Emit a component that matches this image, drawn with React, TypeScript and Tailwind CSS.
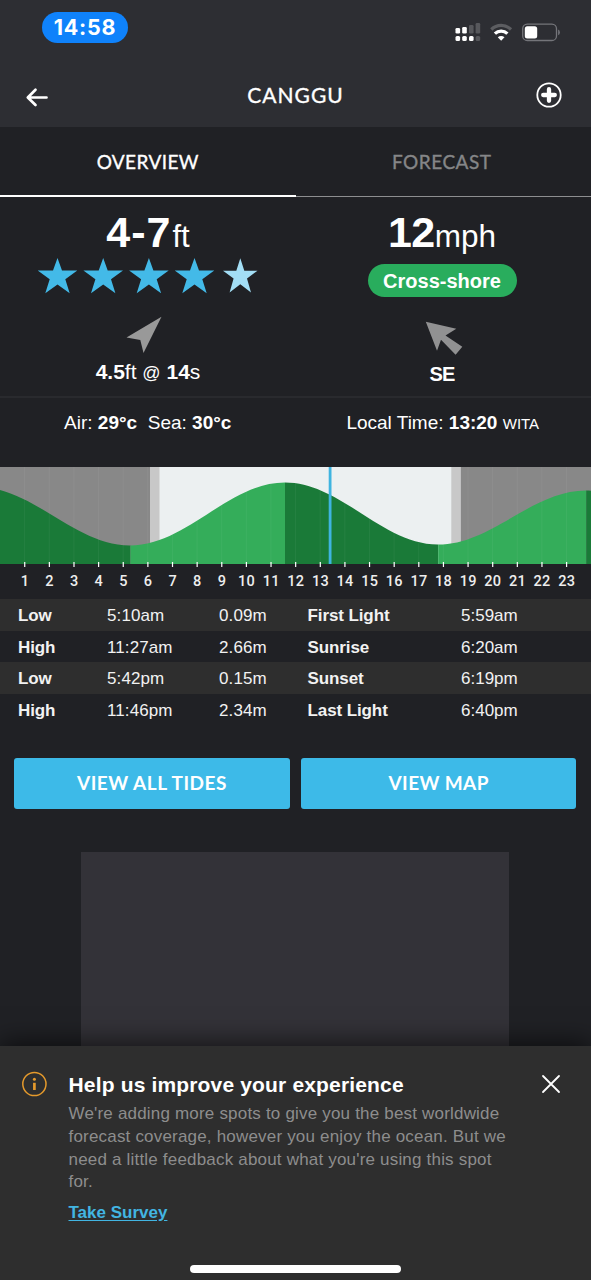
import React from "react";

const tides = [
  ["Low", "5:10am", "0.09m", "First Light", "5:59am"],
  ["High", "11:27am", "2.66m", "Sunrise", "6:20am"],
  ["Low", "5:42pm", "0.15m", "Sunset", "6:19pm"],
  ["High", "11:46pm", "2.34m", "Last Light", "6:40pm"],
];

const hours = Array.from({ length: 23 }, (_, i) => i + 1);

function StatusBar() {
  return (
    <div className="flex h-[62px] items-start justify-between pl-[42px] pr-[31px]">
      <div className="mt-[12px] flex h-[31px] w-[86px] items-center justify-center rounded-full bg-[#0f82fb] font-[Inter,sans-serif] text-[21.500px] font-bold tracking-[0.8px]">
        14:58
      </div>
      <svg className="mt-[20px]" width="106" height="24" viewBox="454 20 106 24">
        <g fill="#fff">
          <rect x="455.5" y="28" width="4.6" height="5.5" rx="1.3" />
          <rect x="462.2" y="27" width="4.6" height="6.5" rx="1.3" />
          <rect x="455.5" y="36" width="4.6" height="5" rx="1.5" />
          <rect x="462.2" y="36" width="4.6" height="5" rx="1.5" />
          <rect x="469" y="36" width="4.6" height="5" rx="1.5" />
        </g>
        <g fill="#57585c">
          <rect x="469" y="25" width="4.6" height="8.5" rx="1.3" />
          <rect x="475.6" y="23" width="4.6" height="10.5" rx="1.3" />
          <rect x="475.6" y="36" width="4.6" height="5" rx="1.5" />
        </g>
        <path d="M491.300 29.500 A14 14 0 0 1 511 29.500" fill="none" stroke="#5c5d61" strokeWidth="3.200" />
        <path d="M494.900 33.600 A8.900 8.900 0 0 1 507.400 33.600" fill="none" stroke="#fff" strokeWidth="3.200" />
        <path d="M497.800 37.300 A4.800 4.800 0 0 1 504.500 37.300 L501.150 40.800 Z" fill="#fff" />
        <rect x="522.700" y="24.200" width="33.800" height="16.300" rx="4.600" fill="none" stroke="#74757a" strokeWidth="1.300" />
        <rect x="524.800" y="26.200" width="12.400" height="12.300" rx="2.500" fill="#fff" />
        <path d="M558.100 29.500 Q559.900 30.300 559.900 32.400 Q559.900 34.500 558.100 35.300 Z" fill="#74757a" />
      </svg>
    </div>
  );
}

function Header() {
  return (
    <header className="h-[127px] bg-[#2d2e33]">
      <StatusBar />
      <div className="flex h-[65px] items-center justify-between pl-[25px] pr-[28px]">
        <svg width="24" height="20" viewBox="25 87 24 20" className="mt-[4px]" fill="none" stroke="#fff" strokeWidth="2.700" strokeLinecap="round" strokeLinejoin="round">
          <path d="M46.500 97.500 H28 M35.500 89.800 L27.800 97.500 L35.500 105" />
        </svg>
        <h1 className="ml-[7px] mt-[1px] font-[Lato,sans-serif] text-[21px] tracking-[1px] [-webkit-text-stroke:0.35px_white]">CANGGU</h1>
        <svg width="28" height="28" viewBox="0 0 28 28">
          <circle cx="14" cy="14" r="11.700" fill="none" stroke="#fff" strokeWidth="1.800" />
          <path d="M14 8.200 V19.800 M8.200 14 H19.800" stroke="#fff" strokeWidth="4.300" strokeLinecap="round" />
        </svg>
      </div>
    </header>
  );
}

function Tabs() {
  return (
    <nav className="flex h-[70px] text-center font-[Lato,sans-serif] text-[19px] leading-[69px]">
      <div className="h-[69.500px] w-[295.500px] border-b-[2px] border-white tracking-[0.4px] [-webkit-text-stroke:0.35px_white]">OVERVIEW</div>
      <div className="h-[70px] flex-1 border-b border-[#8d8e90] pr-[3px] tracking-[0.5px] text-[#858688] [-webkit-text-stroke:0.35px_#858688]">FORECAST</div>
    </nav>
  );
}

function Stars() {
  return (
    <svg width="222" height="38" viewBox="36 257 222 38" className="block">
      {[0, 45.7, 91.400, 137].map((dx) => (
        <path
          key={dx}
          transform={`translate(${dx} 0)`}
          fill="#43bae8"
          d="M57.500 258 L62 270.600 L77.300 270.600 L65.300 279.200 L69.700 293.300 L57.500 284.500 L45.300 293.300 L49.700 279.200 L37.700 270.600 L53 270.600 Z"
        />
      ))}
      <path
        fill="#a3def5"
        d="M240.300 258.300 L244.300 270.700 L257.500 270.700 L247 278.600 L251 292.600 L240.300 284.300 L229.600 292.600 L233.600 278.600 L223 270.700 L236.300 270.700 Z"
      />
    </svg>
  );
}

function Conditions() {
  return (
    <section className="grid h-[199px] grid-cols-[294px_295px]">
      <div className="flex flex-col items-center">
        <div className="mt-[10px] h-[50px] whitespace-nowrap pl-[2px] text-[31px] leading-[50px]">
          <b className="text-[43px] tracking-[1px]">4-7</b>
          <span className="ml-[1px]">ft</span>
        </div>
        <Stars />
        <svg width="36" height="37" viewBox="126 316 36 37" className="-ml-[6px] mt-[21px]">
          <path d="M161.500 316.800 L126.500 337.500 L140.300 340 L143.500 353 Z" fill="#999" />
        </svg>
        <div className="mt-[6px] whitespace-nowrap pl-[2px] text-[21px] leading-[26px]">
          <b>4.5</b>ft <span className="text-[18px]">@</span> <b>14</b>s
        </div>
      </div>
      <div className="flex flex-col items-center pl-[1px]">
        <div className="mt-[10px] h-[50px] whitespace-nowrap text-[31.500px] leading-[50px]">
          <b className="text-[43px] tracking-[-0.5px]">12</b>mph
        </div>
        <div className="mt-[7px] flex h-[33px] w-[149px] items-center justify-center rounded-full bg-[#29ad5d] pt-px text-[20px] font-bold">
          Cross-shore
        </div>
        <svg width="38" height="35" viewBox="425 321 38 35" className="ml-[3px] mt-[24px]">
          <path d="M425.800 321.700 L456.300 328.800 L445.500 335.500 L462.300 346.700 L455.600 354.700 L441 339.700 L437 350.800 Z" fill="#919192" />
        </svg>
        <b className="mt-[5px] text-[20px] leading-[26px] tracking-[-0.8px]">SE</b>
      </div>
    </section>
  );
}

function TideChart() {
  const curve =
    "M-22 20 C33.400 20 74.600 78.500 130 78.500 C186.500 78.500 228.500 15.500 285 15.500 C341 15.500 382 77.500 438 77.500 C492 77.500 532 23.500 586 23.500 C588 23.500 590 23.700 592 24 V97 H-22 Z";
  return (
    <section className="h-[132px]">
      <svg width="591" height="101" viewBox="0 0 591 101" className="block">
        <defs>
          <clipPath id="tide"><path d={curve} /></clipPath>
        </defs>
        <rect width="591" height="97" fill="#ecf0f1" />
        <rect width="150" height="97" fill="#888" />
        <rect x="150" width="9.500" height="97" fill="#c8c8c8" />
        <rect x="451.300" width="9.500" height="97" fill="#c8c8c8" />
        <rect x="460.800" width="131" height="97" fill="#888" />
        <g clipPath="url(#tide)">
          <rect width="130.500" height="97" fill="#1a7a38" />
          <rect x="130.500" width="154.500" height="97" fill="#34ad5a" />
          <rect x="285" width="153.200" height="97" fill="#1a7a38" />
          <rect x="438.200" width="148" height="97" fill="#34ad5a" />
          <rect x="586.200" width="5" height="97" fill="#1a7a38" />
        </g>
        {hours.map((h) => (
          <g key={h}>
            <rect x={h * 24.63 - 0.5} width="1" height="97" fill="#fff" opacity="0.05" />
            <rect x={h * 24.63 - 0.5} y="95" width="1.200" height="5" fill="#fff" />
          </g>
        ))}
        <rect x="328.700" width="2.800" height="97" fill="#3fb4e0" />
      </svg>
      <div className="flex pl-[12.600px] font-[Roboto,sans-serif] text-[14.500px] font-medium leading-[27px] text-[#eee]">
        {hours.map((h) => (
          <span key={h} className="w-[24.63px] shrink-0 text-center tracking-[0.2px]">{h}</span>
        ))}
      </div>
    </section>
  );
}

function TideTable() {
  return (
    <section className="h-[126px]">
      {tides.map((r, i) => (
        <div
          key={i}
          className="grid h-[31.5px] grid-cols-[89px_112px_88.500px_153.500px_1fr] pl-[18px] text-[17px] leading-[33px] text-[#f2f2f2] odd:bg-[#2e2e2e]"
        >
          <b className="tracking-[-0.1px]">{r[0]}</b>
          <span className="tracking-[0.1px]">{r[1]}</span>
          <span className="tracking-[0.1px]">{r[2]}</span>
          <b className="tracking-[-0.1px]">{r[3]}</b>
          <span>{r[4]}</span>
        </div>
      ))}
    </section>
  );
}

function Survey() {
  return (
    <aside className="absolute inset-x-0 bottom-0 flex h-[234px] flex-col bg-[#2e2e2e] shadow-[0_-4px_24px_rgba(0,0,0,0.6)]">
      <div className="flex h-[219px] pl-[22px] pt-[25px]">
        <svg width="25" height="26" viewBox="0 0 25 26" className="shrink-0">
          <circle cx="12.400" cy="13" r="11.600" fill="none" stroke="#e59a2c" strokeWidth="1.500" />
          <circle cx="12.400" cy="8.300" r="1.500" fill="#e59a2c" />
          <path d="M12.400 11.800 V19" stroke="#e59a2c" strokeWidth="2.700" />
        </svg>
        <div className="ml-[21.5px] w-[450px]">
          <h2 className="mt-px whitespace-nowrap text-[21px] font-bold leading-[26px] tracking-[0.16px]">Help us improve your experience</h2>
          <p className="mt-[5px] whitespace-nowrap text-[17px] leading-[22.8px] tracking-[0.19px] text-[#8d8d8d]">
            We're adding more spots to give you the best worldwide<br />
            forecast coverage, however you enjoy the ocean. But we<br />
            need a little feedback about what you're using this spot<br />
            for.
          </p>
          <a className="mt-[7px] block text-[17px] font-bold leading-[24px] text-[#42b5e2] underline underline-offset-2">Take Survey</a>
        </div>
        <svg width="20" height="20" viewBox="0 0 20 20" className="ml-[22px] mt-[3px]" stroke="#fff" strokeWidth="1.800" strokeLinecap="round">
          <path d="M2 2 L18 18 M18 2 L2 18" />
        </svg>
      </div>
      <div className="mx-auto h-[8px] w-[211px] rounded-full bg-white" />
    </aside>
  );
}

export default function App() {
  return (
    <div className="relative h-[1280px] w-[591px] overflow-hidden bg-[#202125] font-['Liberation_Sans',Arial,sans-serif] text-white">
      <Header />
      <Tabs />
      <Conditions />
      <section className="grid h-[71px] grid-cols-2 border-t-2 border-[#292a2e] text-center text-[19px] leading-[49px]">
        <div>Air: <b>29°c</b>&nbsp; Sea: <b>30°c</b></div>
        <div className="pr-px">Local Time: <b>13:20</b> <span className="text-[15px]">WITA</span></div>
      </section>
      <TideChart />
      <TideTable />
      <div className="mt-[32.5px] flex gap-[11.500px] pl-[14.300px] pr-[14.700px] font-[Lato,sans-serif] text-[19px] font-bold">
        <button className="h-[51.500px] flex-1 rounded-[3px] bg-[#3dbae8] tracking-[0.5px]">VIEW ALL TIDES</button>
        <button className="h-[51.500px] flex-1 rounded-[3px] bg-[#3dbae8] tracking-[0.4px]">VIEW MAP</button>
      </div>
      <div className="ml-[81.300px] mt-[43px] h-[356px] w-[428px] bg-[#333238]" />
      <Survey />
    </div>
  );
}
